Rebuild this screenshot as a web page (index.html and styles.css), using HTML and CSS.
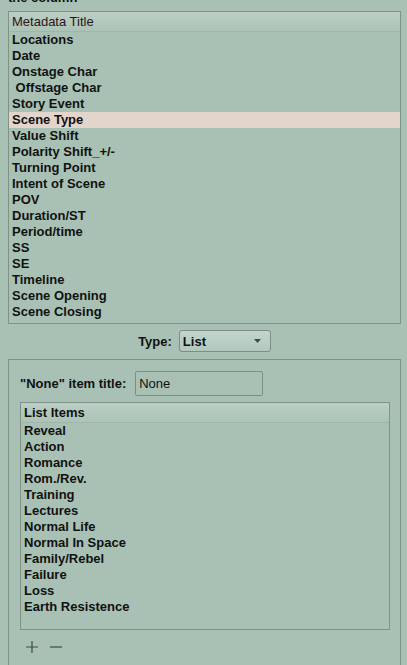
FILE: index.html
```html
<!DOCTYPE html>
<html>
<head>
<meta charset="utf-8">
<link rel="stylesheet" href="styles.css">
</head>
<body>
<div class="caption">the column</div>
<div class="table meta">
  <div class="thead normal">Metadata Title</div>
  <div class="row">Locations</div>
  <div class="row">Date</div>
  <div class="row">Onstage Char</div>
  <div class="row">&nbsp;Offstage Char</div>
  <div class="row">Story Event</div>
  <div class="row selected">Scene Type</div>
  <div class="row">Value Shift</div>
  <div class="row">Polarity Shift_+/-</div>
  <div class="row">Turning Point</div>
  <div class="row">Intent of Scene</div>
  <div class="row">POV</div>
  <div class="row">Duration/ST</div>
  <div class="row">Period/time</div>
  <div class="row">SS</div>
  <div class="row">SE</div>
  <div class="row">Timeline</div>
  <div class="row">Scene Opening</div>
  <div class="row">Scene Closing</div>
</div>
<div class="type-row">
  <span class="label">Type:</span>
  <div class="select">
    <span>List</span>
    <svg class="arrow" width="7" height="4" viewBox="0 0 7 4"><path d="M0 0H7L3.5 4Z" fill="#3e4a44"/></svg>
  </div>
</div>
<div class="panel">
  <div class="none-row">
    <span class="label">"None" item title:</span>
    <div class="input">None</div>
  </div>
  <div class="table list">
    <div class="thead">List Items</div>
    <div class="row">Reveal</div>
    <div class="row">Action</div>
    <div class="row">Romance</div>
    <div class="row">Rom./Rev.</div>
    <div class="row">Training</div>
    <div class="row">Lectures</div>
    <div class="row">Normal Life</div>
    <div class="row">Normal In Space</div>
    <div class="row">Family/Rebel</div>
    <div class="row">Failure</div>
    <div class="row">Loss</div>
    <div class="row">Earth Resistence</div>
  </div>
  <div class="buttons">
    <svg width="12" height="12" viewBox="0 0 12 12"><path d="M6 0V12M0 6H12" stroke="#3f4a44" stroke-width="1.2"/></svg>
    <svg width="12" height="12" viewBox="0 0 12 12"><path d="M0 6H12" stroke="#3f4a44" stroke-width="1.2"/></svg>
  </div>
</div>
</body>
</html>
```

FILE: styles.css
```css
html, body {
  margin: 0;
  padding: 0;
  background: #a8c1b4;
  font-family: "Liberation Sans", Arial, sans-serif;
  font-size: 13px;
  color: #111;
  overflow: hidden;
}
.caption {
  font-weight: bold;
  line-height: 16px;
  margin-top: -10px;
  padding-left: 8px;
  height: 16px;
}
.table {
  border: 1px solid #7e9288;
  font-weight: bold;
}
.meta {
  margin: 5px 6px 0 8px;
  padding-bottom: 3px;
}
.thead {
  height: 19px;
  line-height: 20px;
  padding-left: 3px;
  border-bottom: 1px solid #9fb6aa;
  background: linear-gradient(#bccec4, #abc3b6);
  font-weight: bold;
}
.thead.normal {
  font-weight: normal;
  color: #2b1416;
}
.row {
  height: 16px;
  line-height: 16px;
  padding-left: 3px;
  white-space: pre;
}
.row.selected {
  background: #e3d5cc;
}
.type-row {
  display: flex;
  justify-content: center;
  align-items: center;
  gap: 7px;
  margin-top: 6px;
  padding-left: 2px;
  font-weight: bold;
}
.select {
  box-sizing: border-box;
  width: 92px;
  height: 22px;
  border: 1px solid #7c8e85;
  border-radius: 3px;
  background: linear-gradient(#c3d5cc, #b2c8bd);
  display: flex;
  align-items: center;
  justify-content: space-between;
  padding: 0 9px 0 3px;
}
.panel {
  margin: 7px 6px 0 8px;
  border: 1px solid #7e9288;
  border-bottom: none;
  padding: 11px 10px 0 11px;
  height: 320px;
}
.none-row {
  display: flex;
  align-items: center;
  gap: 9px;
  font-weight: bold;
}
.input {
  box-sizing: border-box;
  width: 128px;
  height: 25px;
  line-height: 24px;
  border: 1px solid #7c8e85;
  border-radius: 2px;
  padding-left: 3px;
  font-weight: normal;
}
.list {
  margin-top: 6px;
  height: 226px;
}
.buttons {
  display: flex;
  gap: 12px;
  padding: 11px 0 0 6px;
}
```
